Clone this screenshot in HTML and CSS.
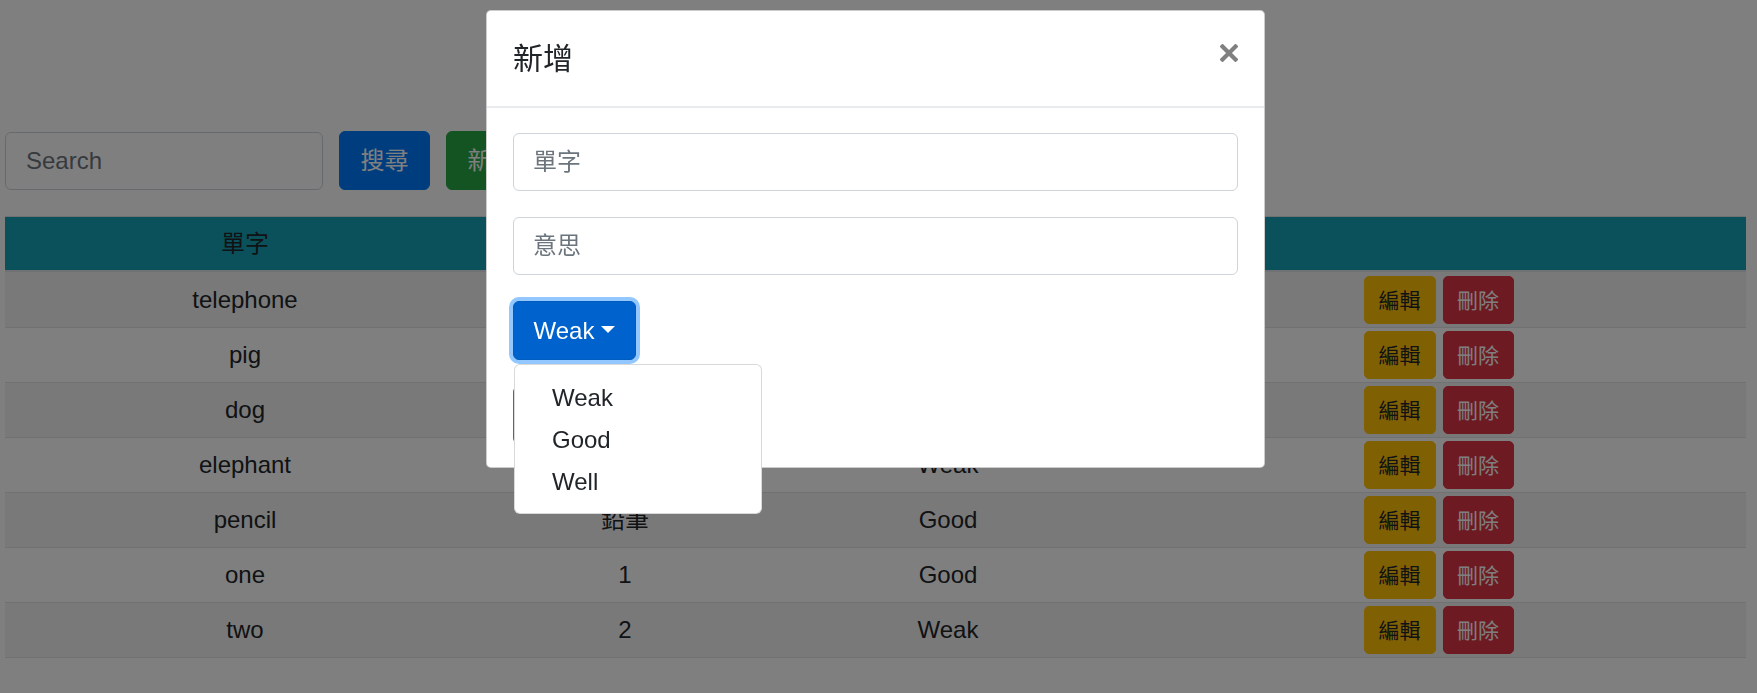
FILE: index.html
```html
<!DOCTYPE html>
<html lang="zh-Hant">
<head>
<meta charset="utf-8">
<title>單字</title>
<link rel="stylesheet" href="styles.css">
</head>
<body>
<main class="page">
  <form class="search-bar">
    <input class="search-input" type="text" placeholder="Search">
    <button type="button" class="btn btn-primary btn-main">搜尋</button>
    <button type="button" class="btn btn-success btn-main">新增</button>
  </form>
  <table class="words">
    <colgroup>
      <col class="c1"><col class="c2"><col class="c3"><col class="c4">
    </colgroup>
    <thead>
      <tr><th>單字</th><th>意思</th><th>熟練度</th><th></th></tr>
    </thead>
    <tbody>
      <tr><td>telephone</td><td>電話</td><td>Good</td><td class="actions"><div class="act-group"><button class="btn-sm btn-warning">編輯</button><button class="btn-sm btn-danger">刪除</button></div></td></tr>
      <tr><td>pig</td><td>豬</td><td>Weak</td><td class="actions"><div class="act-group"><button class="btn-sm btn-warning">編輯</button><button class="btn-sm btn-danger">刪除</button></div></td></tr>
      <tr><td>dog</td><td>狗</td><td>Well</td><td class="actions"><div class="act-group"><button class="btn-sm btn-warning">編輯</button><button class="btn-sm btn-danger">刪除</button></div></td></tr>
      <tr><td>elephant</td><td>大象</td><td>Weak</td><td class="actions"><div class="act-group"><button class="btn-sm btn-warning">編輯</button><button class="btn-sm btn-danger">刪除</button></div></td></tr>
      <tr><td>pencil</td><td>鉛筆</td><td>Good</td><td class="actions"><div class="act-group"><button class="btn-sm btn-warning">編輯</button><button class="btn-sm btn-danger">刪除</button></div></td></tr>
      <tr><td>one</td><td>1</td><td>Good</td><td class="actions"><div class="act-group"><button class="btn-sm btn-warning">編輯</button><button class="btn-sm btn-danger">刪除</button></div></td></tr>
      <tr><td>two</td><td>2</td><td>Weak</td><td class="actions"><div class="act-group"><button class="btn-sm btn-warning">編輯</button><button class="btn-sm btn-danger">刪除</button></div></td></tr>
    </tbody>
  </table>
</main>

<div class="backdrop"></div>

<div class="modal">
  <div class="modal-header">
    <h5 class="modal-title">新增</h5>
    <button type="button" class="close" aria-label="Close">
      <svg width="18" height="18" viewBox="0 0 18 18"><path d="M2.5 2.5 L15.5 15.5 M15.5 2.5 L2.5 15.5" stroke="#808080" stroke-width="4.2" stroke-linecap="square" fill="none"/></svg>
    </button>
  </div>
  <div class="modal-body">
    <input class="field" type="text" placeholder="單字">
    <input class="field" type="text" placeholder="意思">
    <div class="dropdown">
      <button type="button" class="btn btn-dd">Weak<span class="caret"></span></button>
      <div class="dropdown-menu">
        <a class="dropdown-item">Weak</a>
        <a class="dropdown-item">Good</a>
        <a class="dropdown-item">Well</a>
      </div>
    </div>
    <button type="button" class="btn btn-primary btn-main btn-submit" aria-label="送出"></button>
  </div>
</div>
</body>
</html>
```
FILE: styles.css
```css
* { box-sizing: border-box; }

body {
  margin: 0;
  font-family: "Liberation Sans", Arial, "Noto Sans CJK TC", sans-serif;
  font-size: 24px;
  line-height: 36px;
  color: #212529;
  background: #fff;
}

.page {
  padding: 131px 11px 0 5px;
}

/* search bar */
.search-bar {
  display: flex;
  align-items: center;
  gap: 16px;
  margin: 0 0 26px;
}

.search-input {
  width: 318px;
  height: 58px;
  padding: 0 18px 0 20px;
  border: 1.5px solid #ced4da;
  border-radius: 6px;
  font: inherit;
  color: #495057;
  background: #fff;
}
.search-input::placeholder { color: #6c757d; }

.btn {
  font-family: inherit;
  font-size: 24px;
  line-height: 36px;
  border: 1.5px solid transparent;
  border-radius: 6px;
  color: #fff;
  padding: 0;
  cursor: pointer;
}
.btn-main {
  width: 91px;
  height: 59px;
}
.btn-primary { background: #007bff; border-color: #007bff; }
.btn-success { background: #28a745; border-color: #28a745; }

/* table */
.words {
  width: 1741px;
  table-layout: fixed;
  border-collapse: separate;
  border-spacing: 0;
  text-align: center;
}
.c1 { width: 480px; }
.c2 { width: 280px; }
.c3 { width: 366px; }
.c4 { width: 615px; }

.words th {
  background: #17a2b8;
  font-weight: normal;
  padding: 8.5px 12px;
  border-top: 1px solid #dee2e6;
  border-bottom: 2px solid #dee2e6;
}
.words td {
  padding: 9px 12px;
  border-top: 1px solid #dee2e6;
  vertical-align: middle;
}
.words tbody tr:first-child td { border-top: 0; padding-top: 10px; }
.words tbody tr:last-child td { border-bottom: 1px solid #dee2e6; }
.words tbody tr:nth-child(odd) td { background: rgba(0, 0, 0, 0.05); }

.words td.actions { padding: 3px 12px; }
.words tbody tr:first-child td.actions { padding-top: 4px; }

.act-group {
  display: flex;
  justify-content: center;
  gap: 7px;
}
.btn-sm {
  width: 72px;
  height: 48px;
  padding: 0;
  border: 1.5px solid transparent;
  border-radius: 5px;
  font-family: inherit;
  font-size: 21px;
  line-height: 31px;
}
.btn-warning { background: #ffc107; border-color: #ffc107; color: #212529; }
.btn-danger { background: #dc3545; border-color: #dc3545; color: #fff; width: 71px; }

/* modal */
.backdrop {
  position: fixed;
  inset: 0;
  background: rgba(0, 0, 0, 0.5);
}

.modal {
  position: fixed;
  top: 10px;
  left: 486px;
  width: 779px;
  background: #fff;
  border: 1px solid rgba(0, 0, 0, 0.2);
  border-radius: 5px;
}

.modal-header {
  display: flex;
  justify-content: space-between;
  align-items: flex-start;
  padding: 25px 26px;
  border-bottom: 2px solid #e9ecef;
}
.modal-title {
  margin: 0;
  font-size: 30px;
  line-height: 45px;
  font-weight: normal;
  color: #212529;
}
.close {
  margin-top: 8px;
  padding: 0;
  border: 0;
  background: transparent;
  width: 18px;
  height: 18px;
  display: flex;
  cursor: pointer;
}

.modal-body {
  display: flex;
  flex-direction: column;
  align-items: flex-start;
  gap: 26px;
  padding: 25px 26px 23px;
}

.field {
  width: 100%;
  height: 58px;
  padding: 0 18px 0 19px;
  border: 1.5px solid #ced4da;
  border-radius: 6px;
  font: inherit;
  color: #495057;
  background: #fff;
}
.field::placeholder { color: #6c757d; }

.dropdown {
  position: relative;
}
.btn-dd {
  height: 59px;
  padding: 0 19.5px;
  background: #0062cc;
  border-color: #005cbf;
  box-shadow: 0 0 0 4px rgba(38, 143, 255, 0.5);
  display: flex;
  align-items: center;
}
.caret {
  display: inline-block;
  margin-left: 7px;
  margin-top: -3px;
  border-top: 7px solid #fff;
  border-left: 7px solid transparent;
  border-right: 7px solid transparent;
}

.dropdown-menu {
  position: absolute;
  top: calc(100% + 4px);
  left: 1px;
  width: 248px;
  padding: 12px 0 10px;
  background: #fff;
  border: 1.5px solid rgba(0, 0, 0, 0.15);
  border-radius: 6px;
  z-index: 2;
}
.dropdown-item {
  display: block;
  padding: 3px 36px 3px 37px;
  line-height: 36px;
  color: #212529;
}

.btn-submit {
  height: 58px;
}
```
